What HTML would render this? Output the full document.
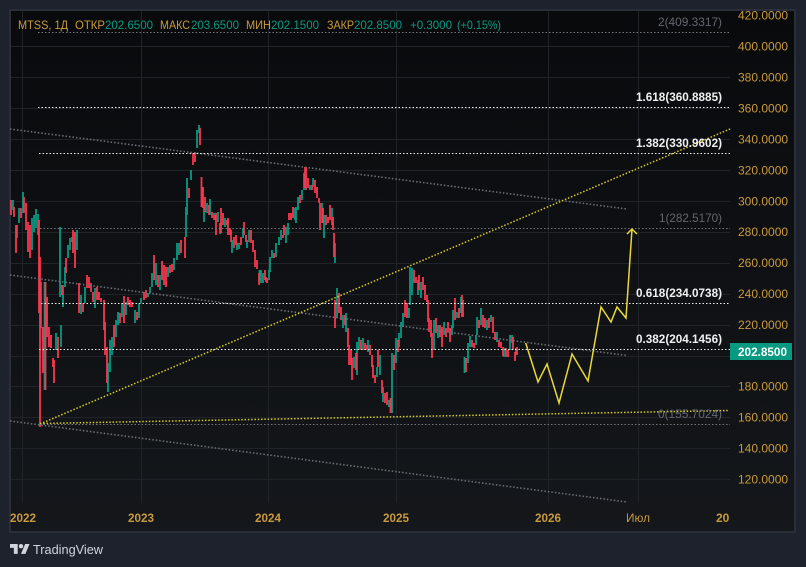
<!DOCTYPE html>
<html lang="ru"><head><meta charset="utf-8"><title>MTSS</title>
<style>
html,body{margin:0;padding:0;width:806px;height:567px;overflow:hidden;background:#1e222d}
svg{display:block;font-family:"Liberation Sans",sans-serif}
.ax text{fill:#c99a3c;font-size:12px}
.t text{fill:#c99a3c;font-size:12px;font-weight:bold}
.lg{font-size:12px}
.o{fill:#c99a3c}.g{fill:#089981}
.fw{fill:#f0f0f0;font-size:12px;font-weight:bold}
.fg{fill:#63666e;font-size:12px}
</style></head><body>
<svg width="806" height="567" viewBox="0 0 806 567" xmlns="http://www.w3.org/2000/svg">
<defs><linearGradient id="bg" x1="0" y1="0" x2="0" y2="1"><stop offset="0" stop-color="#090a0c"/><stop offset="1" stop-color="#14171b"/></linearGradient></defs>
<rect x="10" y="10" width="785" height="522" fill="url(#bg)" stroke="#2a2e39" stroke-width="2"/>
<path d="M11 46.5H730M11 77.5H730M11 108.5H730M11 139.5H730M11 170.5H730M11 201.5H730M11 232.5H730M11 263.5H730M11 294.5H730M11 325.5H730M11 356.5H730M11 386.5H730M11 417.5H730M11 448.5H730M11 479.5H730M22.5 11V503M141.5 11V503M268.5 11V503M396.5 11V503M548.5 11V503M638.5 11V503" stroke="#202327" stroke-width="1" fill="none"/>

<path fill="none" stroke="#089981" stroke-width="1.8" d="M13 200V210M17 225V238M19 208V223M23 192V213M32 218V250M34 215V232M36 209V228M38 214V235M41 282V328M42.5 327V340M44.6 282V390M56 333V350M60 227V297M61 325V347M63 285V307M65 267V287M68 245V258M70 238V250M72 237V242M77 230V250M81 295V314M85 287V303M95 288V308M108 363V392M110 340V372M112 337V355M116 320V337M118 312V325M122 303V317M126 302V315M135 310V323M139 303V318M141 298V303M148 293V297M150 287V293M152 273V287M156 263V285M160 275V290M168 267V277M174 258V270M177 243V260M179 243V255M186 207V237M187 178V215M191 170V180M197 130V148M199 125V133M204 207V222M207 203V213M210 199V215M214 213V220M218 212V222M220 223V234M225 218V227M232 240V253M237 243V250M239 243V249M243 228V238M247 240V248M249 230V242M259.5 270V280M261 270V283M263 273V283M269 270V280M270 257V272M272 250V258M276 243V257M279 237V245M281 230V240M286 227V243M288 223V235M295 208V220M296 207V223M298 197V210M302 190V200M304 173V190M310 185V190M313 178V187M322 203V223M324 215V238M332 208V225M335 243V263M337 288V318M343 315V328M346 313V332M354 357V368M357 342V375M359 337V350M363 338V350M368 340V352M377 367V377M380 355V375M383 387V402M389 400V407M392 353V413M396 338V363M399 333V347M401 322V338M403 313V327M409 308V318M410 267V305M412 268V295M418 280V295M421 282V298M434 320V350M438 325V338M444 322V335M452 325V335M453 310V328M457 312V318M461 297V313M464.5 357V373M468 343V363M470 336V347M476 335V345M477 317V335M481 308V325M487 320V330M491 315V322M497 332V342M504 348V357M510 335V350M512 335V343M516 348V355"/>
<path fill="none" stroke="#f7374f" stroke-width="1.8" d="M11 200V215M14 207V217M16 225V253M21 208V218M24 197V213M26 203V230M28 222V252M30 225V258M39 220V313M40 257V427M43 327V373M45.5 282V390M47 297V337M49 327V347M51 335V348M53 358V367M54 360V383M58 337V358M62 285V295M66 258V273M73 230V253M75 232V268M79 283V313M83 303V312M87 275V288M89 277V288M91 283V292M93 292V302M97 287V300M99 292V300M101 298V302M104 300V330M105 322V355M107 347V383M114 325V347M120 313V323M124 296V323M128 297V305M130 300V307M132 302V307M137 312V320M144 292V300M146 290V298M154 255V280M158 275V287M162 261V280M164 265V285M166 267V287M170 265V273M172 264V272M181 240V253M185 237V258M189 188V198M193 153V165M195 152V162M200 128V145M201.5 177V207M203 187V208M205 197V212M209 205V215M212 212V218M215 215V220M216 213V235M221 208V233M223 213V225M227 220V225M228 218V235M230 228V235M231 230V242M234 237V248M236 235V245M241 237V245M244 222V235M246 235V242M251 230V243M253 240V252M255 250V267M257 260V269M259 273V285M265 270V280M266 277V282M267 278V283M274 253V258M283 235V238M284 225V235M289 213V220M291 213V220M293 207V218M300 195V203M305 167V188M306 167V190M308 178V188M312 185V190M315 180V193M317 187V198M319 198V203M320 203V230M323 208V223M326 215V225M328 217V223M330 205V220M333 217V230M334 233V257M335 300V328M339 293V313M341 307V320M345 315V325M348 328V347M349 345V365M351 350V365M352 358V380M356 353V370M361 340V350M365 343V350M367 345V350M370 345V355M372 355V367M373 365V378M375 375V383M378 350V367M382 380V393M385 393V403M387 392V405M390.5 398V413M394 355V370M398 340V352M405 300V317M407 303V318M414 270V283M416 277V283M419 275V290M423 277V290M425 285V300M427 295V302M428 300V322M429 318V332M431 320V337M432 333V358M436 318V333M440 325V337M442 327V347M446 328V337M448 322V332M450 328V342M455 298V320M459 308V318M462 295V317M463 300V317M466 358V372M472 340V347M474 343V348M479 320V328M483 315V327M485 318V328M489 318V328M493 317V333M495 332V340M499 340V347M501 342V348M503 347V356M506 348V357M508 350V357M513 337V350M515 352V361M517 347V355"/>

<g fill="none" stroke="#6b6e74" stroke-width="1.6" stroke-dasharray="1.5 2">
<path d="M10 129L627 209"/><path d="M10 275L627 355.5"/><path d="M10 421L627 502"/>
</g>
<g fill="none" stroke="#d6cd2a" stroke-width="1.5" stroke-dasharray="1.5 1.8">
<path d="M40 424L730 129"/><path d="M40 423.5L728 410.5"/>
</g>
<g fill="none" stroke-width="1" stroke-dasharray="1.5 2">
<path d="M38 32.5H730" stroke="#74777d"/>
<path d="M38 107.5H730" stroke="#f0f0f0"/>
<path d="M39 153.5H730" stroke="#f0f0f0"/>
<path d="M40 228.5H730" stroke="#74777d"/>
<path d="M41 303.5H730" stroke="#f0f0f0"/>
<path d="M39 349.5H730" stroke="#f0f0f0"/>
<path d="M40 424.5H730" stroke="#74777d"/>
</g>
<path fill="none" stroke="#e9d838" stroke-width="1.5" d="M525.7 343L538 382L547 364L559 403L572 354L588 381L601 307L611 322L617 307L626 318L632 229M627 234L632 229L637 234"/>

<text class="fg" x="658" y="26" textLength="64" lengthAdjust="spacingAndGlyphs">2(409.3317)</text>
<text class="fw" x="636" y="101" textLength="86" lengthAdjust="spacingAndGlyphs">1.618(360.8885)</text>
<text class="fw" x="636" y="147" textLength="86" lengthAdjust="spacingAndGlyphs">1.382(330.9602)</text>
<text class="fg" x="659" y="222" textLength="63" lengthAdjust="spacingAndGlyphs">1(282.5170)</text>
<text class="fw" x="636" y="297" textLength="86" lengthAdjust="spacingAndGlyphs">0.618(234.0738)</text>
<text class="fw" x="636" y="343" textLength="86" lengthAdjust="spacingAndGlyphs">0.382(204.1456)</text>
<text class="fg" x="658" y="418" textLength="64" lengthAdjust="spacingAndGlyphs">0(155.7024)</text>

<g class="lg">
<text class="o" x="18" y="29" textLength="50" lengthAdjust="spacingAndGlyphs">MTSS, 1Д</text>
<text class="o" x="75" y="29" textLength="30" lengthAdjust="spacingAndGlyphs">ОТКР</text><text class="g" x="105" y="29" textLength="48" lengthAdjust="spacingAndGlyphs">202.6500</text>
<text class="o" x="160" y="29" textLength="30" lengthAdjust="spacingAndGlyphs">МАКС</text><text class="g" x="191" y="29" textLength="48" lengthAdjust="spacingAndGlyphs">203.6500</text>
<text class="o" x="246" y="29" textLength="25" lengthAdjust="spacingAndGlyphs">МИН</text><text class="g" x="271" y="29" textLength="48" lengthAdjust="spacingAndGlyphs">202.1500</text>
<text class="o" x="327" y="29" textLength="27" lengthAdjust="spacingAndGlyphs">ЗАКР</text><text class="g" x="354" y="29" textLength="48" lengthAdjust="spacingAndGlyphs">202.8500</text>
<text class="g" x="410" y="29" textLength="42" lengthAdjust="spacingAndGlyphs">+0.3000</text><text class="g" x="457" y="29" textLength="44" lengthAdjust="spacingAndGlyphs">(+0.15%)</text>
</g>

<g class="ax">
<text x="738" y="19.5">420.0000</text>
<text x="738" y="50.5">400.0000</text>
<text x="738" y="81.5">380.0000</text>
<text x="738" y="112.5">360.0000</text>
<text x="738" y="143.5">340.0000</text>
<text x="738" y="174.5">320.0000</text>
<text x="738" y="205.5">300.0000</text>
<text x="738" y="236">280.0000</text>
<text x="738" y="267">260.0000</text>
<text x="738" y="298">240.0000</text>
<text x="738" y="329">220.0000</text>
<text x="738" y="390.5">180.0000</text>
<text x="738" y="421.5">160.0000</text>
<text x="738" y="452.5">140.0000</text>
<text x="738" y="483.5">120.0000</text>
</g>
<rect x="730" y="343" width="62" height="17" fill="#089981"/>
<text x="738" y="356" fill="#fff" font-size="12" font-weight="bold" textLength="49" lengthAdjust="spacingAndGlyphs">202.8500</text>

<g class="t">
<text x="10" y="522" textLength="26" lengthAdjust="spacingAndGlyphs">2022</text>
<text x="128" y="522" textLength="26" lengthAdjust="spacingAndGlyphs">2023</text>
<text x="255" y="522" textLength="26" lengthAdjust="spacingAndGlyphs">2024</text>
<text x="383" y="522" textLength="26" lengthAdjust="spacingAndGlyphs">2025</text>
<text x="535" y="522" textLength="26" lengthAdjust="spacingAndGlyphs">2026</text>
<text x="626" y="522" style="font-weight:normal" textLength="24" lengthAdjust="spacingAndGlyphs">Июл</text>
<text x="716" y="522">20</text>
</g>

<g transform="translate(10 541.8) scale(.55)" fill="#d1d4dc"><path d="M14 22H7V11H0V4h14v18zM28 22h-8l7.5-18h8L28 22z"/><circle cx="20" cy="8" r="4"/></g>
<text x="33" y="554" fill="#d1d4dc" font-size="13" textLength="70" lengthAdjust="spacingAndGlyphs">TradingView</text>
</svg>
</body></html>
